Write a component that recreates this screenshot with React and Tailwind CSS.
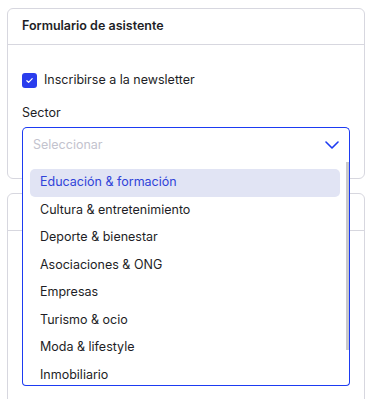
import React from 'react';

const sectors = [
  'Educación & formación',
  'Cultura & entretenimiento',
  'Deporte & bienestar',
  'Asociaciones & ONG',
  'Empresas',
  'Turismo & ocio',
  'Moda & lifestyle',
  'Inmobiliario',
];

const App = () => {
  return (
    <div className="h-[399px] w-[372px] overflow-hidden bg-white font-['Inter',sans-serif] text-[12.5px] text-[#1e1e26]">
      {/* Attendee form card */}
      <div className="mx-[7px] mt-[8px] rounded-[6px] border border-[#d7d7df]">
        <div className="flex h-[35px] items-center px-[14px] font-semibold">Formulario de asistente</div>
        <div className="border-t border-[#d7d7df] px-[14px] pt-[28px] pb-[16px]">
          <label className="flex h-[15px] items-center gap-[7px]">
            <span className="flex h-[15px] w-[15px] items-center justify-center rounded-[3px] bg-[#2a3ded]">
              <svg width="9" height="9" viewBox="0 0 12 12" fill="none">
                <path d="M2.5 6.3l2.3 2.3 4.8-5" stroke="white" strokeWidth="1.6" strokeLinecap="round" strokeLinejoin="round" />
              </svg>
            </span>
            <span>Inscribirse a la newsletter</span>
          </label>
          <div className="mt-[16px] mb-[5px] leading-[18px]">Sector</div>
          <div className="relative">
            <div className="flex h-[35px] items-center justify-between rounded-t-[5px] border border-b-0 border-[#1d3bf2] pl-[10px] pr-[10px]">
              <span className="text-[#c3c3ce]">Seleccionar</span>
              <svg width="14" height="8" viewBox="0 0 14 8" fill="none">
                <path d="M1 1l6 6 6-6" stroke="#1d3bf2" strokeWidth="1.6" strokeLinecap="round" strokeLinejoin="round" />
              </svg>
            </div>
            {/* Open dropdown list */}
            <div className="absolute left-0 right-0 top-full z-10 h-[224px] overflow-hidden rounded-b-[4px] border border-t-0 border-[#1d3bf2] bg-white">
              <div className="absolute right-0 top-0 h-[188px] w-[3px] bg-[#c9c9cc]" />
              <div className="pl-[7px] pr-[9px] pt-[7px]">
                {sectors.map((s, i) => (
                  <div
                    key={s}
                    className={`flex h-[27.5px] items-center rounded-[5px] px-[10px] ${
                      i === 0 ? 'bg-[#e1e4f4] text-[#3043d9]' : ''
                    }`}
                  >
                    {s}
                  </div>
                ))}
              </div>
            </div>
          </div>
        </div>
      </div>

      {/* Second card */}
      <div className="mx-[7px] mt-[14px] h-[300px] rounded-[6px] border border-[#d7d7df]">
        <div className="h-[36px]" />
        <div className="border-t border-[#d7d7df]" />
      </div>
    </div>
  );
};

export default App;
